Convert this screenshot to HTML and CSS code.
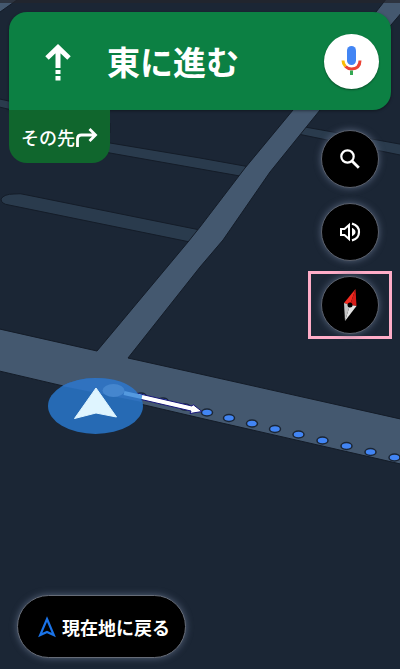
FILE: index.html
```html
<!DOCTYPE html>
<html lang="ja">
<head>
    <meta charset="UTF-8">
    <meta name="viewport" content="width=device-width, initial-scale=1.0">
    <title>ナビ</title>
    <link rel="stylesheet" href="styles.css">
</head>
<body>
    <div class="screen">
        <!-- Map -->
        <svg class="map" viewBox="0 0 400 669" preserveAspectRatio="xMidYMid slice" aria-hidden="true">
            <g class="road-minor">
                <path d="M-5 98L110 123 110 133-5 106Z"/>
                <path d="M90 139L110 143 200 158 250 167 240 176 110 153 90 149Z"/>
                <path d="M14 194Q20 193 27 195L205 231 190 242 9 205Q1 204 1 199Q4 194 14 194Z"/>
                <path d="M305 127L405 145V156L298 134Z"/>
            </g>
            <g class="road-main">
                <path d="M-5 328L97 351 188 242 200 227 245 168 293 110 376 12 387-2H414L391 25 320 110 270 172 223 240 200 267 128 358 200 374 405 420V465L200 418-5 370Z"/>
                <path d="M-5-5H24L0 12-5 15Z"/>
            </g>
            <rect class="status-shade" width="400" height="3"/>

            <!-- Route -->
            <g class="route">
                <ellipse cx="141" cy="396" rx="5" ry="3"/>
                <ellipse cx="163" cy="401" rx="5" ry="3"/>
                <ellipse cx="185" cy="407" rx="5" ry="3"/>
                <ellipse cx="207" cy="412.5" rx="5.5" ry="3.5"/>
                <ellipse cx="229" cy="418" rx="5.5" ry="3.5"/>
                <ellipse cx="252" cy="423.5" rx="5.5" ry="3.5"/>
                <ellipse cx="275" cy="429" rx="5.5" ry="3.5"/>
                <ellipse cx="298.5" cy="434.5" rx="5.5" ry="3.5"/>
                <ellipse cx="322.5" cy="440.5" rx="5.5" ry="3.5"/>
                <ellipse cx="346.5" cy="446" rx="5.5" ry="3.5"/>
                <ellipse cx="370.5" cy="452" rx="5.5" ry="3.5"/>
                <ellipse cx="394.5" cy="457.5" rx="5.5" ry="3.5"/>
            </g>
            <path class="heading" d="M125 390.500L192 406 193 404.500 202 411.500 190 413.500 191 411 124 395.500Z"/>

            <!-- Current position -->
            <ellipse class="puck" cx="95.500" cy="406" rx="47.500" ry="28"/>
            <path class="puck-road" d="M62 386Q78 378 95 378Q123 378 136 391L142 402Z"/>
            <path class="puck-line" d="M124 393L142 397"/>
            <ellipse class="puck-dot" cx="113.500" cy="390.500" rx="11" ry="6.500"/>
            <path class="puck-arrow" d="M96 388L116.500 417 96 413 74.500 418.500Z"/>
        </svg>

        <!-- Direction banner -->
        <header class="banner">
            <svg class="banner-arrow" viewBox="0 0 26 42" aria-hidden="true">
                <path d="M13 28V8M2 18L13 7.500L24 18"/>
                <path d="M13 30V34M13 36V40.500"/>
            </svg>
            <h1>東に進む</h1>
            <button class="mic" type="button" aria-label="音声">
                <svg width="22" height="30" viewBox="0 0 22 30">
                    <rect x="6" y="0" width="9" height="19" rx="4.500" fill="#4285f4"/>
                    <g fill="none" stroke-width="3">
                        <path d="M2 14.500Q2 18 4.500 20.500" stroke="#fbbc04"/>
                        <path d="M4.500 20.500Q7 23 10.500 23Q19 22.500 19 14.500" stroke="#ea4335"/>
                        <path d="M10.500 24.500V29" stroke="#34a853"/>
                    </g>
                </svg>
            </button>
        </header>

        <div class="below">
            <div class="next-step">
                <span>その先</span>
                <svg width="23" height="20" viewBox="0 0 23 20" aria-hidden="true">
                    <path d="M2.500 20V12Q2.500 8 6.500 8H20M14.500 2L20.500 8L14.500 14"/>
                </svg>
            </div>

            <!-- Map controls -->
            <div class="controls">
                <button class="round" type="button" aria-label="検索">
                    <svg width="20" height="20" viewBox="0 0 20 20">
                        <g fill="none" stroke="#fff">
                            <circle cx="7.500" cy="7.500" r="6.200" stroke-width="2.200"/>
                            <path d="M12 12L18.800 18.800" stroke-width="2.800"/>
                        </g>
                    </svg>
                </button>
                <button class="round" type="button" aria-label="音量">
                    <svg width="22" height="20" viewBox="0 0 22 20">
                        <path d="M2 7H5.500L10 3V17L5.500 13H2Z" fill="none" stroke="#fff" stroke-width="2"/>
                        <path d="M13 5.800Q16.500 7.500 16.500 10T13 14.200Z" fill="#fff"/>
                        <path d="M13 1.600Q20 3.500 20 10T13 18.400" fill="none" stroke="#fff" stroke-width="2.200"/>
                    </svg>
                </button>
                <div class="highlight">
                    <button class="round" type="button" aria-label="コンパス">
                        <svg width="14" height="34" viewBox="0 0 14 34">
                            <path d="M12.500 1L1 15 7 17Z" fill="#f32b20"/>
                            <path d="M12.500 1L13.500 18 7 17Z" fill="#d51c18"/>
                            <path d="M1 15L2 33 7 17Z" fill="#c4c4c4"/>
                            <path d="M13.500 18L2 33 7 17Z" fill="#e4e4e4"/>
                            <circle cx="7" cy="17" r="2.500"/>
                        </svg>
                    </button>
                </div>
            </div>
        </div>

        <button class="recenter" type="button">
            <svg width="18" height="22" viewBox="0 0 18 22" aria-hidden="true">
                <path d="M9 3L15.800 19 9 16 2.200 19Z"/>
            </svg>
            現在地に戻る
        </button>
    </div>
</body>
</html>
```
FILE: styles.css
```css
body {
    margin: 0;
    font-family: "Noto Sans CJK JP", sans-serif;
    font-weight: 700;
    color: #fff;
    background-color: #1b2635;
}

button {
    padding: 0;
    border: none;
    font: inherit;
    color: inherit;
    cursor: pointer;
}

.screen {
    position: relative;
    display: flex;
    flex-direction: column;
    box-sizing: border-box;
    min-height: 100vh;
    padding: 12px 9px 11px;
    overflow: hidden;
    isolation: isolate;
}

/* Map */
.map {
    position: absolute;
    inset: 0;
    z-index: -1;
    width: 100%;
    height: 100%;
}

.road-minor {
    fill: #2a3b4d;
    stroke: #141c28;
}

.road-main {
    fill: #44586f;
    stroke: #141c28;
}

.status-shade {
    fill: #23252c;
    opacity: 0.7;
}

.route {
    fill: #4285f4;
    stroke: #1b2635;
    stroke-width: 1.5px;
}

.heading {
    fill: #fff;
    stroke: #15157a;
}

.puck {
    fill: #266ab4;
}

.puck-road {
    fill: #3072bf;
}

.puck-line {
    stroke: #5499df;
    stroke-width: 4px;
}

.puck-dot {
    fill: #4586ce;
}

.puck-arrow {
    fill: #dff5ff;
    stroke: #dff5ff;
    stroke-linejoin: round;
}

/* Direction banner */
.banner {
    display: flex;
    align-items: center;
    height: 98px;
    padding: 0 12px 0 36px;
    border-radius: 18px;
    border-bottom-left-radius: 0;
    background-color: #0c8043;
    box-shadow: 0 1px 3px rgba(0, 0, 0, 0.4);
}

.banner-arrow {
    width: 26px;
    height: 42px;
    fill: none;
    stroke: #fff;
    stroke-width: 5px;
}

.banner h1 {
    flex: 1;
    margin: 0 0 0 36px;
    font-size: 33px;
    line-height: 48px;
    font-weight: inherit;
}

.mic {
    display: flex;
    align-items: center;
    justify-content: center;
    width: 55px;
    height: 55px;
    border-radius: 50%;
    background-color: #fff;
    box-shadow: 0 1px 2px rgba(0, 0, 0, 0.4);
}

.below {
    display: flex;
    align-items: flex-start;
    justify-content: space-between;
}

.next-step {
    display: flex;
    align-items: center;
    height: 53px;
    padding: 0 12px;
    border-radius: 0 0 18px 18px;
    background-color: #10662d;
    font-size: 18px;
    line-height: 26px;
    font-weight: 500;
}

.next-step svg {
    fill: none;
    stroke: #fff;
    stroke-width: 2.8px;
}

/* Map controls */
.controls {
    display: flex;
    flex-direction: column;
    align-items: center;
    gap: 15px;
    margin-right: -1px;
    padding-top: 20px;
}

.round {
    display: flex;
    align-items: center;
    justify-content: center;
    box-sizing: border-box;
    width: 58px;
    height: 58px;
    border: 1px solid #5a606c;
    border-radius: 50%;
    background-color: #000;
    box-shadow: 0 0 7px #56637a;
}

.highlight {
    margin-top: -5px;
    padding: 2px 10px;
    border: 3px solid #ffadc8;
}

/* Recenter */
.recenter {
    display: flex;
    align-items: center;
    align-self: flex-start;
    gap: 6px;
    box-sizing: border-box;
    height: 63px;
    margin: auto 0 0 8px;
    padding: 0 15px 0 20px;
    border: 1px solid #666c77;
    border-radius: 32px;
    background-color: #000;
    box-shadow: 0 0 7px #56637a;
    font-size: 18px;
    line-height: 26px;
}

.recenter svg {
    fill: none;
    stroke: #1a73e8;
    stroke-width: 2.2px;
}
```
